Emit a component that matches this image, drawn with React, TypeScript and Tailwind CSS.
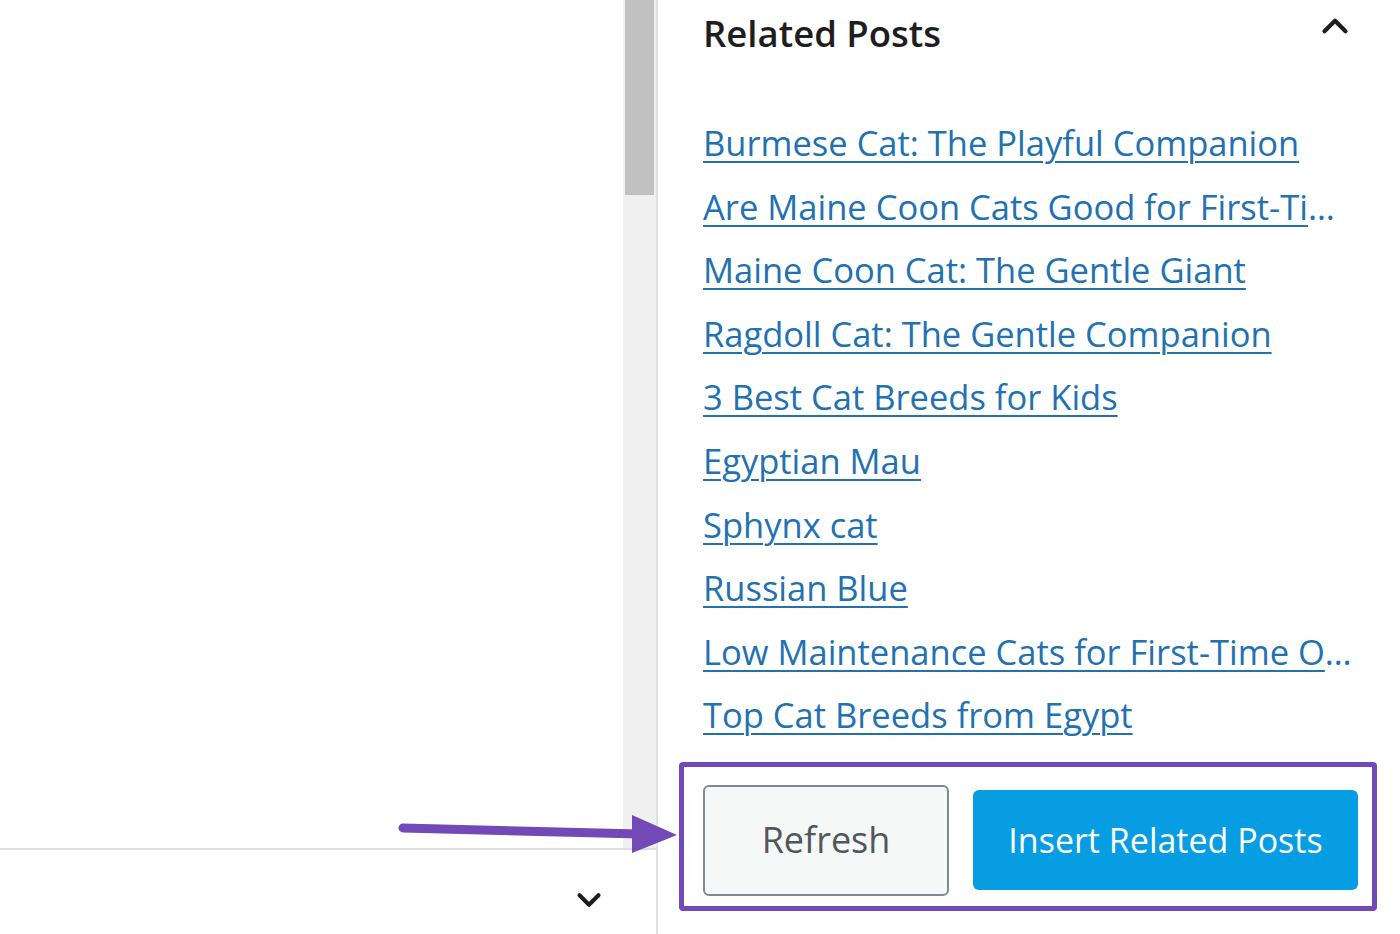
import { ChevronDown, ChevronUp } from "lucide-react";

const posts = [
	"Burmese Cat: The Playful Companion",
	"Are Maine Coon Cats Good for First-Time Owners?",
	"Maine Coon Cat: The Gentle Giant",
	"Ragdoll Cat: The Gentle Companion",
	"3 Best Cat Breeds for Kids",
	"Egyptian Mau",
	"Sphynx cat",
	"Russian Blue",
	"Low Maintenance Cats for First-Time Owners",
	"Top Cat Breeds from Egypt",
];

const font = { fontFamily: '"Open Sans", "Noto Sans", sans-serif' };

export default function App() {
	return (
		<div
			className="relative flex h-[934px] w-[1400px] overflow-hidden bg-white"
			style={font}
		>
			{/* editor side */}
			<div className="flex w-[656px] shrink-0 flex-col">
				<div className="flex h-[848px]">
					<div className="flex-1" />
					<div className="flex w-[33px] flex-col bg-[#f0f0f0] px-[2px]">
						<div className="h-[195px] bg-[#c1c1c1]" />
					</div>
				</div>
				<div className="flex flex-1 items-start justify-end border-t-2 border-[#e0e0e0] pr-[48px] pt-[31px]">
					<ChevronDown className="h-[38px] w-[38px] text-[#1e1e1e]" strokeWidth={2.6} />
				</div>
			</div>

			{/* sidebar */}
			<div className="flex min-w-0 flex-1 flex-col border-l-2 border-[#e0e0e0]">
				<header className="flex h-[66px] items-center justify-between pl-[45px] pr-[44px]">
					<h2 className="text-[36.5px] font-semibold text-[#1e1e1e]">Related Posts</h2>
					<ChevronUp className="mb-[14px] h-[42px] w-[42px] text-[#1e1e1e]" strokeWidth={2.4} />
				</header>

				<ul className="flex flex-col pl-[45px] pr-[38px] pt-[45px]">
					{posts.map((p) => (
						<li key={p} className="h-[63.6px]">
							<a
								href="#"
								title={p}
								className="block truncate text-[34.5px] leading-[63px] text-[#2271b1] underline decoration-2 underline-offset-[5px]"
							>
								{p}
							</a>
						</li>
					))}
				</ul>

				<div className="ml-[21px] mr-[23px] mt-[15px] flex items-center gap-[24px] rounded-[4px] border-[5px] border-[#7249b6] pb-[10px] pl-[19px] pr-[14px] pt-[18px]">
					<button className="h-[111px] w-[246px] rounded-[6px] border-2 border-[#7e8993] bg-[#f6f7f7] text-[36px] text-[#50575e]">
						Refresh
					</button>
					<button className="h-[100px] flex-1 rounded-[6px] bg-[#069de3] text-[34px] text-white">
						Insert Related Posts
					</button>
				</div>
			</div>

			{/* annotation arrow */}
			<svg
				className="pointer-events-none absolute left-[395px] top-[810px]"
				width="290"
				height="50"
				viewBox="0 0 290 50"
			>
				<line x1="8" y1="18" x2="245" y2="24" stroke="#7249b6" strokeWidth="9" strokeLinecap="round" />
				<polygon points="237,5 282,25 237,43" fill="#7249b6" />
			</svg>
		</div>
	);
}
